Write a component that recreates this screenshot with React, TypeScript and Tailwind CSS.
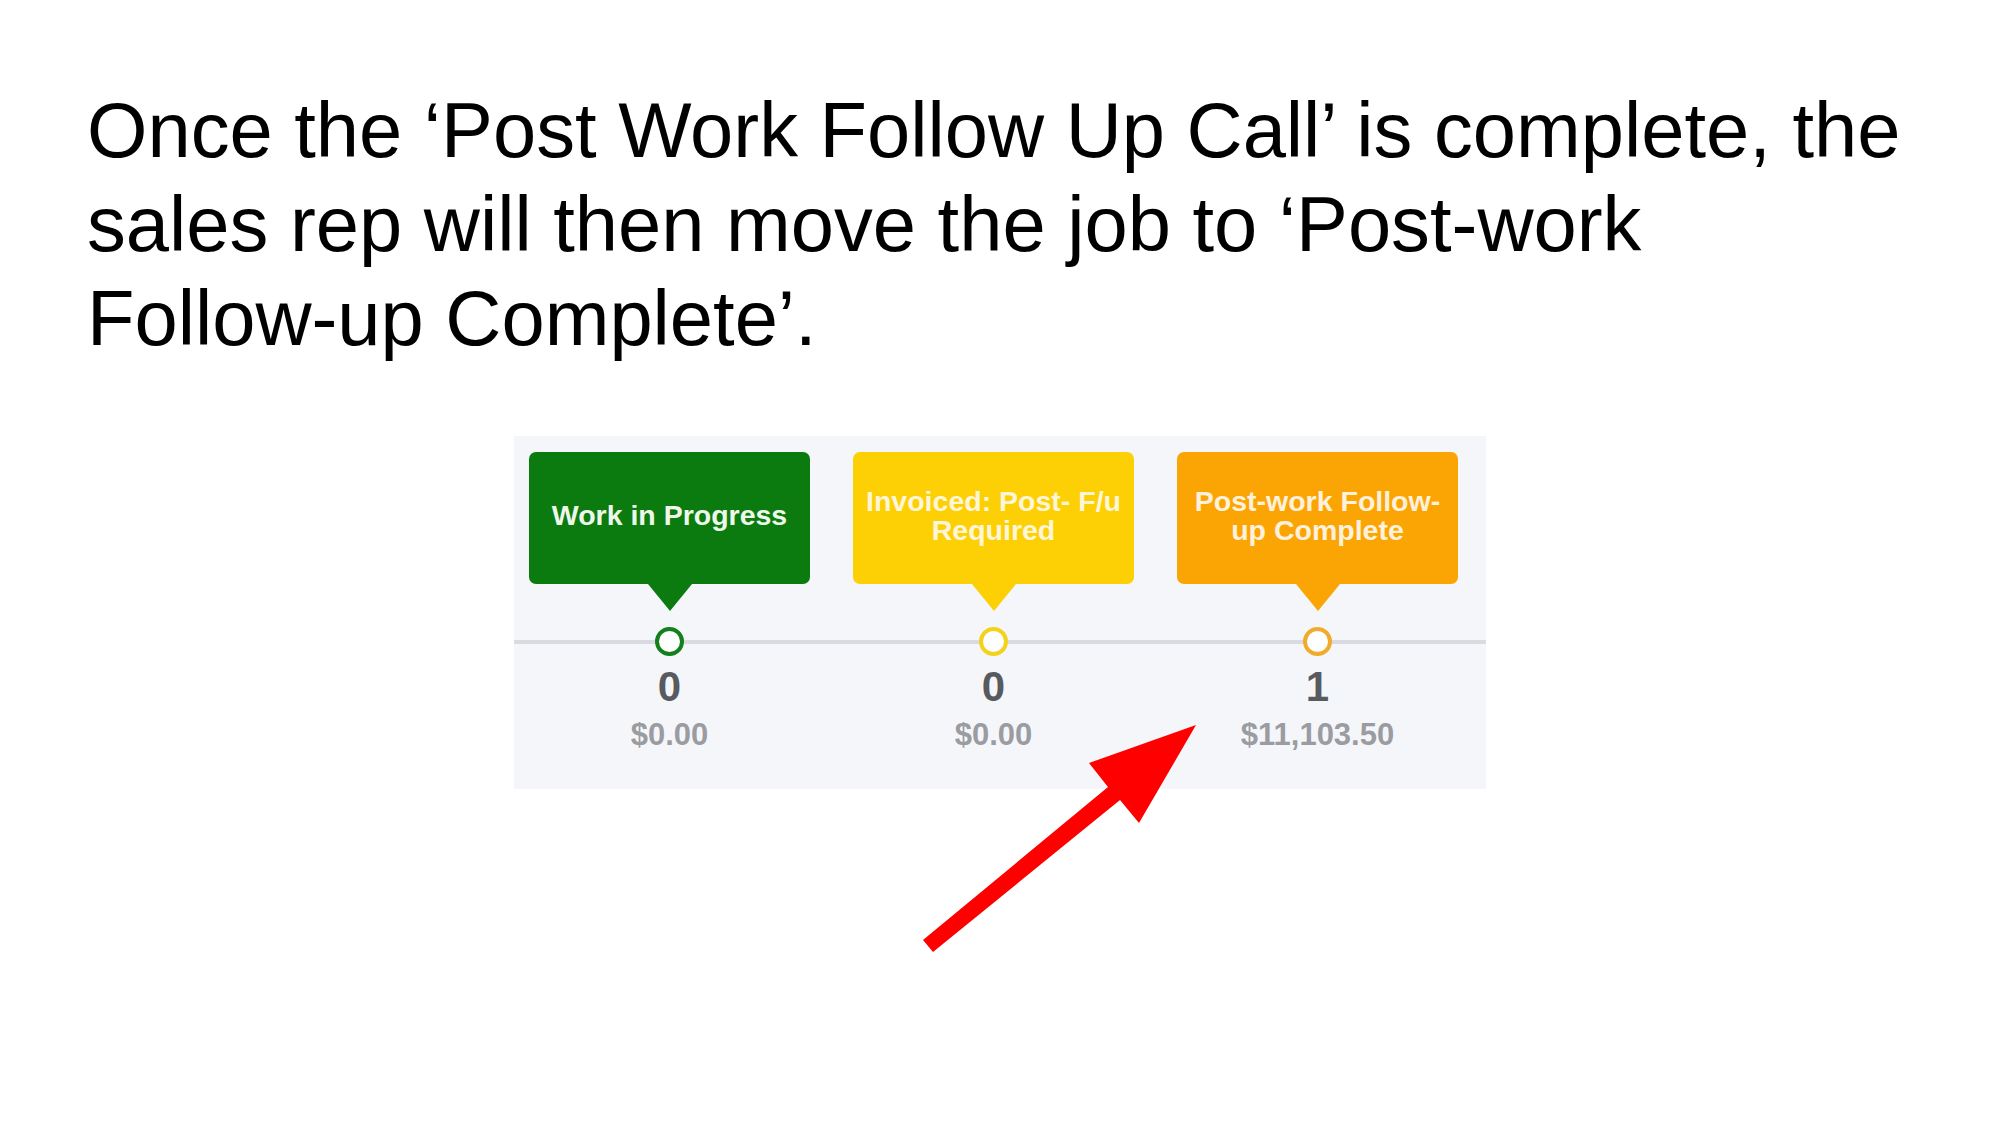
import React from "react";

type Stage = {
  lines: string[];
  box: string;
  text: string;
  ring: string;
  count: string;
  amount: string;
  triangle: string;
};

const stages: Stage[] = [
  {
    lines: ["Work in Progress"],
    box: "bg-[#0b7b10]",
    text: "text-[#eef8ea]",
    ring: "border-[#13801b]",
    count: "0",
    amount: "$0.00",
    triangle: "border-t-[#0b7b10]",
  },
  {
    lines: ["Invoiced: Post- F/u", "Required"],
    box: "bg-[#fdd005]",
    text: "text-[#fff6da]",
    ring: "border-[#f4d21c]",
    count: "0",
    amount: "$0.00",
    triangle: "border-t-[#fdd005]",
  },
  {
    lines: ["Post-work Follow-", "up Complete"],
    box: "bg-[#fba505]",
    text: "text-[#fff1dc]",
    ring: "border-[#f1ab2c]",
    count: "1",
    amount: "$11,103.50",
    triangle: "border-t-[#fba505]",
  },
];

function StageColumn({ s }: { s: Stage }) {
  return (
    <div className="flex flex-col">
      <div className="pl-[15px] pr-[28px]">
        <div
          className={`relative flex h-[132px] w-[281px] flex-col items-center justify-center rounded-[7px] ${s.box} px-[6px] pb-[5px] text-center text-[28.5px] font-bold leading-[29px] ${s.text}`}
        >
          {s.lines.map((l, i) => (
            <div key={i} className="whitespace-nowrap">
              {l}
            </div>
          ))}
          <div
            className={`absolute left-1/2 top-full h-0 w-0 -translate-x-1/2 border-l-[22px] border-r-[22px] border-t-[27px] border-l-transparent border-r-transparent ${s.triangle}`}
          />
        </div>
      </div>
      <div className="relative mt-[43px] h-[29px]">
        <div className="absolute inset-x-0 top-[13px] h-[4px] bg-[#d9dbe0]" />
        <div className="relative flex w-[311px] justify-center pl-[15px] pr-[15px]">
          <div className="flex w-[281px] justify-center">
            <div className={`h-[29px] w-[29px] rounded-full border-[4px] ${s.ring} bg-white`} />
          </div>
        </div>
      </div>
      <div className="pl-[15px]">
        <div className="w-[281px] text-center">
          <div className="mt-[10px] text-[42px] font-bold leading-[42px] text-[#575a5f]">{s.count}</div>
          <div className="mt-[11px] text-[31px] font-bold leading-[31px] text-[#9a9ca1]">{s.amount}</div>
        </div>
      </div>
    </div>
  );
}

export default function App() {
  return (
    <div
      className="relative min-h-[1125px] w-[2000px] overflow-hidden bg-white"
      style={{ fontFamily: '"Liberation Sans", Arial, sans-serif' }}
    >
      <div className="pl-[87px] pt-[83px] text-[77.7px] leading-[94px] text-black">
        <div className="whitespace-nowrap">Once the ‘Post Work Follow Up Call’ is complete, the</div>
        <div className="whitespace-nowrap">sales rep will then move the job to ‘Post-work</div>
        <div className="whitespace-nowrap">Follow-up Complete’.</div>
      </div>

      <div className="mx-auto mt-[71px] grid h-[353px] w-[972px] grid-cols-3 bg-[#f5f6fa] pt-[16px]">
        {stages.map((s, i) => (
          <StageColumn key={i} s={s} />
        ))}
      </div>

      <svg
        className="pointer-events-none absolute left-0 top-0"
        width={2000}
        height={1125}
        viewBox="0 0 2000 1125"
      >
        <polygon
          points="923,940 1108,787 1089,763 1196,725 1139,823 1120,800 933,952"
          fill="#fe0000"
        />
      </svg>
    </div>
  );
}
